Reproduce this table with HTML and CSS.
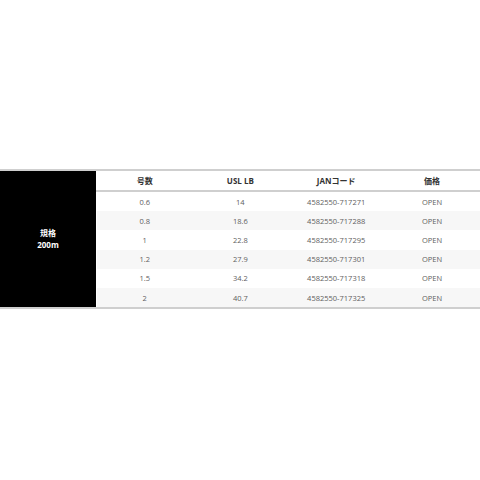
FILE: index.html
```html
<!DOCTYPE html>
<html lang="ja">
<head>
<meta charset="utf-8">
<link rel="stylesheet" href="styles.css">
</head>
<body>
<div class="page">
  <table class="spec">
    <tbody>
      <tr class="head">
        <th class="label" rowspan="7"><span>規格</span><span>200m</span></th>
        <th>号数</th><th>USL LB</th><th>JANコード</th><th>価格</th>
      </tr>
      <tr><td>0.6</td><td>14</td><td>4582550-717271</td><td>OPEN</td></tr>
      <tr class="alt"><td>0.8</td><td>18.6</td><td>4582550-717288</td><td>OPEN</td></tr>
      <tr><td>1</td><td>22.8</td><td>4582550-717295</td><td>OPEN</td></tr>
      <tr class="alt"><td>1.2</td><td>27.9</td><td>4582550-717301</td><td>OPEN</td></tr>
      <tr><td>1.5</td><td>34.2</td><td>4582550-717318</td><td>OPEN</td></tr>
      <tr class="alt"><td>2</td><td>40.7</td><td>4582550-717325</td><td>OPEN</td></tr>
    </tbody>
  </table>
</div>
</body>
</html>
```
FILE: styles.css
```css
html, body {
  margin: 0;
  padding: 0;
  background: #fff;
}
.page {
  padding-top: 169px;
  width: 480px;
}
.spec {
  width: 480px;
  border-collapse: collapse;
  table-layout: fixed;
  border-top: 2px solid #cfcfcf;
  border-bottom: 2px solid #cfcfcf;
  font-family: "Open Sans", "Noto Sans CJK JP", sans-serif;
}
.spec th, .spec td {
  padding: 0;
  text-align: center;
  vertical-align: middle;
}
.spec .label {
  width: 96px;
  background: #000;
  color: #fff;
  font-weight: 700;
  font-size: 8px;
  border-right: 1px solid #fff;
}
.spec .label span {
  display: block;
  line-height: 12px;
}
.head th {
  height: 19px;
  font-size: 8px;
  font-weight: 700;
  color: #333;
  border-bottom: 2px solid #cfcfcf;
}
.spec td {
  height: 19.2px;
  font-size: 7.5px;
  color: #5e5e5e;
}
.alt td {
  background: #f7f7f7;
}
```
